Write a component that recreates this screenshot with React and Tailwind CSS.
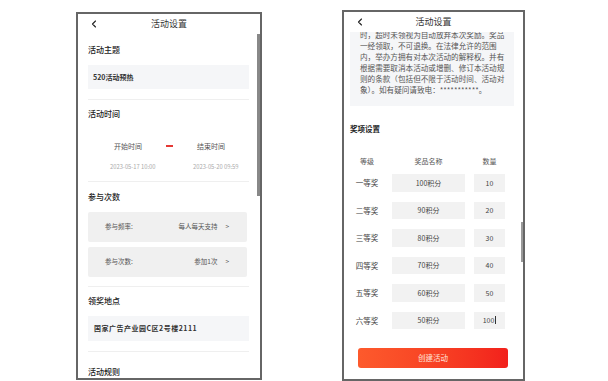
import React from 'react';
import { ChevronLeft } from 'lucide-react';

const font = { fontFamily: '"Noto Sans CJK SC", "Noto Sans", sans-serif' };

// Phone header bar
function Header() {
  return (
    <div className="h-[20px] flex items-center relative shrink-0 bg-white">
      <ChevronLeft size={12} strokeWidth={2.2} className="ml-[10px] text-[#222]" />
      <div className="absolute inset-0 flex items-center justify-center text-[9px] text-[#333]">活动设置</div>
    </div>
  );
}

function SectionTitle({ children, className = '' }) {
  return <div className={`h-[12px] leading-[12px] text-[8px] font-medium text-[#222] ${className}`}>{children}</div>;
}

function Divider({ className = '' }) {
  return <div className={`h-px bg-[#efefef] ${className}`} />;
}

function PickRow({ label, value, className = '' }) {
  return (
    <div className={`h-[30px] bg-[#f0f0f0] rounded-[2px] flex items-center pl-[17px] pr-[18px] ${className}`}>
      <span className="text-[6.5px] text-[#555]">{label}</span>
      <span className="ml-auto text-[6.5px] text-[#555]">{value}</span>
      <span className="ml-[8px] text-[6.5px] text-[#555]">&gt;</span>
    </div>
  );
}

function LeftPhone() {
  return (
    <div className="relative w-[186px] h-[368px] mt-[12px] ml-[76px] border-2 border-[#666] bg-white overflow-hidden flex flex-col">
      <Header />
      <div className="pl-[10px] pr-[11px]">
        <SectionTitle className="mt-[10px]">活动主题</SectionTitle>
        <div className="mt-[9px] h-[24px] bg-[#f5f6f8] flex items-center pl-[5px] text-[7px] font-bold text-[#333]">520活动预热</div>
        <Divider className="mt-[10px]" />
        <SectionTitle className="mt-[8px]">活动时间</SectionTitle>
        <div className="mt-[20px] h-[12px] flex items-center text-[7px] text-[#555]">
          <span className="ml-[25px] w-[30px] text-center">开始时间</span>
          <span className="ml-[23px] w-[7px] h-[2px] bg-[#e53935]" />
          <span className="ml-[23px] w-[30px] text-center">结束时间</span>
        </div>
        <div className="mt-[9px] h-[12px] flex items-center text-[5.8px] text-[#aaa] whitespace-nowrap">
          <span className="ml-[22px] w-[54px]">2023-05-17 10:00</span>
          <span className="ml-[29px] w-[56px]">2023-05-20 09:59</span>
        </div>
        <Divider className="mt-[8px]" />
        <SectionTitle className="mt-[9px]">参与次数</SectionTitle>
        <PickRow className="mt-[9px] mr-[2px]" label="参与频率:" value="每人每天支持" />
        <PickRow className="mt-[5px] mr-[2px]" label="参与次数:" value="参加1次" />
        <Divider className="mt-[9px]" />
        <SectionTitle className="mt-[8px]">领奖地点</SectionTitle>
        <div className="mt-[9px] h-[25px] bg-[#f5f6f8] flex items-center pl-[6px] text-[7px] font-bold tracking-[0.5px] text-[#333]">国家广告产业园C区2号楼2111</div>
        <Divider className="mt-[10px]" />
        <SectionTitle className="mt-[14px]">活动规则</SectionTitle>
      </div>
      {/* scrollbar */}
      <div className="absolute right-0 top-[20px] w-[3px] h-[162px] bg-[#888]" />
    </div>
  );
}

const rules = [
  '时，超时未领视为自动放弃本次奖励。奖品',
  '一经领取，不可退换。在法律允许的范围',
  '内，举办方拥有对本次活动的解释权。并有',
  '根据需要取消本活动或增删、修订本活动规',
  '则的条款（包括但不限于活动时间、活动对',
  '象）。如有疑问请致电：***********。',
];

const prizes = [
  ['一等奖', '100积分', '10'],
  ['二等奖', '90积分', '20'],
  ['三等奖', '80积分', '30'],
  ['四等奖', '70积分', '40'],
  ['五等奖', '60积分', '50'],
  ['六等奖', '50积分', '100'],
];

function RightPhone() {
  return (
    <div className="relative w-[183px] h-[371px] mt-[10px] ml-[80px] border-2 border-[#666] bg-white overflow-hidden flex flex-col">
      <Header />
      <div className="pl-[6px] pr-[9px]">
        <div className="h-[74px] overflow-hidden bg-[#f5f6f8] pl-[10px]">
          <div className="-mt-[3px] text-[7.6px] leading-[11px] text-[#555] whitespace-nowrap">
            {rules.map((r) => <div key={r}>{r}</div>)}
          </div>
        </div>
        <div className="h-[12px] leading-[12px] mt-[17px] text-[7.5px] font-bold text-[#222]">奖项设置</div>
        <div className="mt-[20px] h-[12px] flex items-center text-[7px] text-[#555]">
          <span className="ml-[5px] w-[24px] text-center">等级</span>
          <span className="ml-[13px] w-[73px] text-center">奖品名称</span>
          <span className="ml-[9px] w-[31px] text-center">数量</span>
        </div>
        <div className="mt-[7px] flex flex-col gap-[10px]">
          {prizes.map(([lv, name, qty]) => (
            <div key={lv} className="h-[17.5px] flex items-center text-[7px] text-[#444]">
              <span className="ml-[5px] w-[24px] text-center text-[7.5px]">{lv}</span>
              <span className="ml-[13px] w-[73px] h-full bg-[#f2f2f2] flex items-center justify-center">{name}</span>
              <span className="ml-[9px] w-[31px] h-full bg-[#f2f2f2] flex items-center justify-center">
                {qty}{qty === '100' && <span className="w-px h-[8px] bg-[#333] ml-px" />}
              </span>
            </div>
          ))}
        </div>
        <div className="mt-[19px] ml-[8px] w-[150px] h-[20px] rounded-[3px] bg-gradient-to-r from-[#fd5a2c] to-[#f2201c] flex items-center justify-center text-[7.5px] text-[#ffe3da]">创建活动</div>
      </div>
      {/* scrollbar */}
      <div className="absolute right-0 top-[210px] w-[2px] h-[40px] bg-[#999]" />
    </div>
  );
}

export default function App() {
  return (
    <div className="w-[608px] h-[381px] bg-white flex items-start overflow-hidden" style={font}>
      <LeftPhone />
      <RightPhone />
    </div>
  );
}
